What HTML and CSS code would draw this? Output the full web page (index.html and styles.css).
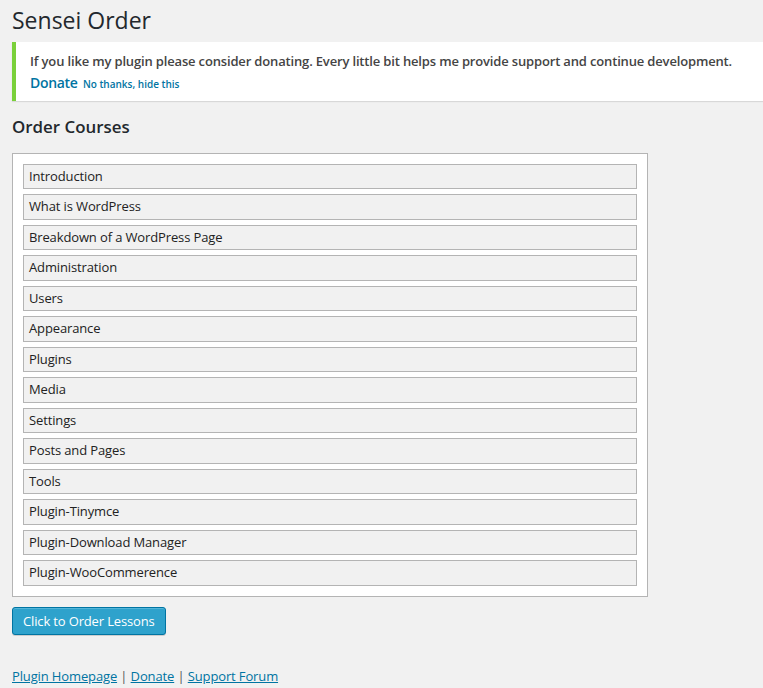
FILE: index.html
```html
<!DOCTYPE html>
<html>
<head>
<meta charset="utf-8">
<link rel="stylesheet" href="styles.css">
</head>
<body>
<div class="wrap">
  <h1 class="title">Sensei Order</h1>
  <div class="notice">
    <p class="notice-text">If you like my plugin please consider donating. Every little bit helps me provide support and continue development.</p>
    <p class="notice-links"><a class="donate" href="#">Donate</a> <a class="hide" href="#">No thanks, hide this</a></p>
  </div>
  <h2 class="section-title">Order Courses</h2>
  <ul class="course-list">
    <li class="course">Introduction</li>
    <li class="course">What is WordPress</li>
    <li class="course">Breakdown of a WordPress Page</li>
    <li class="course">Administration</li>
    <li class="course">Users</li>
    <li class="course">Appearance</li>
    <li class="course">Plugins</li>
    <li class="course">Media</li>
    <li class="course">Settings</li>
    <li class="course">Posts and Pages</li>
    <li class="course">Tools</li>
    <li class="course">Plugin-Tinymce</li>
    <li class="course">Plugin-Download Manager</li>
    <li class="course">Plugin-WooCommerence</li>
  </ul>
  <div class="actions"><button class="button-primary">Click to Order Lessons</button></div>
  <p class="footer-links"><a href="#">Plugin Homepage</a> <span class="sep">|</span> <a href="#">Donate</a> <span class="sep">|</span> <a href="#">Support Forum</a></p>
</div>
</body>
</html>
```
FILE: styles.css
```css
html, body {
  margin: 0;
  padding: 0;
  background: #f1f1f1;
}
body {
  font-family: "Open Sans", "Liberation Sans", sans-serif;
  font-size: 13px;
  line-height: 1.5;
  color: #444;
  letter-spacing: -0.13px;
  overflow: hidden;
}
.wrap {
  margin-left: 12px;
}
.title {
  margin: 0;
  padding: 6px 0 0 0;
  font-size: 23px;
  font-weight: 400;
  line-height: 29px;
  color: #23282d;
  letter-spacing: 0;
}
.notice {
  margin-top: 7px;
  background: #fff;
  border-left: 4px solid #7ad03a;
  box-shadow: 0 1px 1px 0 rgba(0,0,0,.1);
  padding: 1px 12px;
}
.notice p {
  margin: 6.5px 0;
  padding: 2px;
}
.notice-text {
  font-weight: 600;
  line-height: 19.5px;
  white-space: nowrap;
  letter-spacing: -0.16px;
}
.notice .notice-links {
  margin-top: -6.5px;
  padding-top: 0;
  padding-bottom: 1px;
  margin-bottom: 5px;
  line-height: 19px;
}
.notice-links a {
  color: #0074a2;
  text-decoration: none;
}
.donate {
  font-size: 14px;
  font-weight: 600;
  letter-spacing: -0.3px;
}
.hide {
  font-size: 10px;
  font-weight: 600;
  margin-left: 2px;
  letter-spacing: 0;
}
.section-title {
  margin: 16px 0 0 0;
  font-size: 16.9px;
  font-weight: 600;
  line-height: 20.8px;
  color: #23282d;
  letter-spacing: 0;
}
.course-list {
  list-style: none;
  margin: 15px 0 0 0;
  padding: 10px;
  width: 614px;
  background: #fff;
  border: 1px solid #b4b4b4;
  display: flex;
  flex-direction: column;
  gap: 5px;
}
.course {
  margin: 0;
  padding: 2px 5px;
  line-height: 19.5px;
  background: #f1f1f1;
  border: 1px solid #b4b4b4;
  color: #222;
}
.actions {
  margin-top: 10px;
}
.button-primary {
  height: 28px;
  padding: 0 10px 1px;
  font-family: "Open Sans", "Liberation Sans", sans-serif;
  font-size: 13px;
  line-height: 26px;
  letter-spacing: -0.15px;
  color: #fff;
  background: #2ea2cc;
  border: 1px solid #0074a2;
  border-radius: 3px;
  box-shadow: inset 0 1px 0 rgba(120,200,230,.5), 0 1px 0 rgba(0,0,0,.15);
  cursor: pointer;
}
.footer-links {
  margin: 32px 0 0 0;
  line-height: 19.5px;
}
.footer-links a {
  color: #0074a2;
  text-decoration: underline;
}
.sep {
  color: #555;
}
```
